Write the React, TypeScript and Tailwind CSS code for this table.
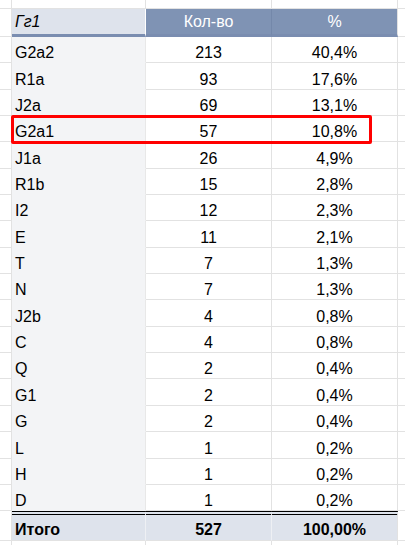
import React from 'react'

type Row = [string, string, string]

const rows: Row[] = [
  ['G2a2', '213', '40,4%'],
  ['R1a', '93', '17,6%'],
  ['J2a', '69', '13,1%'],
  ['G2a1', '57', '10,8%'],
  ['J1a', '26', '4,9%'],
  ['R1b', '15', '2,8%'],
  ['I2', '12', '2,3%'],
  ['E', '11', '2,1%'],
  ['T', '7', '1,3%'],
  ['N', '7', '1,3%'],
  ['J2b', '4', '0,8%'],
  ['C', '4', '0,8%'],
  ['Q', '2', '0,4%'],
  ['G1', '2', '0,4%'],
  ['G', '2', '0,4%'],
  ['L', '1', '0,2%'],
  ['H', '1', '0,2%'],
  ['D', '1', '0,2%'],
]

// сетка листа: поля слева/справа + три колонки
const grid = 'border-[#e2e2e2]'

function Filler({ className = '' }: { className?: string }) {
  return (
    <div className={`flex ${className}`}>
      <div className={`w-[12px] shrink-0 border-r border-b ${grid}`} />
      <div className={`w-[134px] shrink-0 border-r border-b ${grid}`} />
      <div className={`w-[126px] shrink-0 border-r border-b ${grid}`} />
      <div className={`w-[126px] shrink-0 border-r border-b ${grid}`} />
      <div className={`w-[7px] shrink-0 border-b ${grid}`} />
    </div>
  )
}

export default function App() {
  return (
    <div className="relative w-[405px] h-[545px] overflow-hidden bg-white text-black text-[16px] leading-[18px] font-['Liberation_Sans',Arial,sans-serif]">
      <Filler className="h-[9px]" />

      {/* шапка */}
      <div className="flex h-[28px]">
        <div className={`w-[12px] shrink-0 border-r border-b ${grid}`} />
        <div className="w-[134px] shrink-0 flex items-center pl-[3px] bg-[#dee3ec] italic border-r border-r-white border-b-[3px] border-b-[#7a8db0]">
          Гг1
        </div>
        <div className="w-[126px] shrink-0 flex items-center justify-center bg-[#7f93b4] text-white border-r border-r-[#7488aa] border-b-[3px] border-b-[#7a8db0]">
          Кол-во
        </div>
        <div className={`w-[126px] shrink-0 flex items-center justify-center bg-[#7f93b4] text-white border-r ${grid} border-b-[3px] border-b-[#7a8db0]`}>
          %
        </div>
        <div className={`w-[7px] shrink-0 border-b ${grid}`} />
      </div>

      {rows.map(([name, count, pct]) => (
        <div key={name} className="flex h-[26.35px]">
          <div className={`w-[12px] shrink-0 border-r border-b ${grid}`} />
          <div className="w-[134px] shrink-0 flex items-end pl-[3px] bg-[#f3f4f6] border-r border-r-[#e8e8e8] border-b border-b-[#f3f4f6]">
            {name}
          </div>
          <div className={`w-[126px] shrink-0 flex items-end justify-center border-r border-b ${grid}`}>
            {count}
          </div>
          <div className={`w-[126px] shrink-0 flex items-end justify-center border-r border-b ${grid}`}>
            {pct}
          </div>
          <div className={`w-[7px] shrink-0 border-b ${grid}`} />
        </div>
      ))}

      {/* итог */}
      <div className="flex h-[30px] font-bold">
        <div className={`w-[12px] shrink-0 border-r border-b ${grid}`} />
        <div className="w-[134px] shrink-0 flex items-end pb-[1px] pl-[3px] bg-[#dee3ec] border-t-[4px] border-double border-t-black border-r border-r-[#eef0f4] border-b border-b-[#e2e2e2]">
          Итого
        </div>
        <div className="w-[126px] shrink-0 flex items-end pb-[1px] justify-center bg-[#dee3ec] border-t-[4px] border-double border-t-black border-r border-r-[#eef0f4] border-b border-b-[#e2e2e2]">
          527
        </div>
        <div className="w-[126px] shrink-0 flex items-end pb-[1px] justify-center bg-[#dee3ec] border-t-[4px] border-double border-t-black border-r border-r-[#e2e2e2] border-b border-b-[#e2e2e2]">
          100,00%
        </div>
        <div className={`w-[7px] shrink-0 border-b ${grid}`} />
      </div>

      <Filler className="h-[20px]" />

      {/* выделение строки */}
      <div className="absolute left-[11px] top-[115px] w-[361px] h-[29px] border-[3px] border-[#ff0000] rounded-[2px] pointer-events-none" />
    </div>
  )
}
